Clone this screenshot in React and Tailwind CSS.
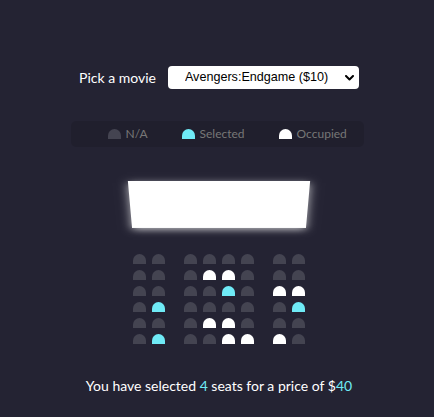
import React, { useState } from "react";

const N = 0;
const S = 1;
const O = 2;

const rows = [
  [N, N, N, N, N, N, N, N],
  [N, N, N, O, O, N, N, N],
  [N, N, N, N, S, N, O, O],
  [N, S, N, N, N, N, N, S],
  [N, N, N, O, O, N, N, N],
  [N, S, N, N, O, O, O, N],
];

const seatColor = {
  [N]: "bg-[#444451]",
  [S]: "bg-[#6feaf6]",
  [O]: "bg-white",
};

const Seat = ({ state, className = "" }) => (
  <div
    className={`w-[13px] h-[10px] rounded-t-[7px] ${seatColor[state]} ${className}`}
  />
);

const App = () => {
  const [movie, setMovie] = useState("10");
  const count = 4;
  const price = count * Number(movie);

  return (
    <div
      className="min-h-[417px] w-full bg-[#242333] text-white flex flex-col items-center pl-1 pt-[66px]"
      style={{ fontFamily: "Lato, 'Open Sans', sans-serif" }}
    >
      <div className="flex items-center">
        <label className="text-[14px] mr-[12px]">Pick a movie</label>
        <div className="relative">
          <select
            value={movie}
            onChange={(e) => setMovie(e.target.value)}
            className="appearance-none bg-white text-black rounded-[4px] w-[191px] h-[23px] pl-[17px] pr-6 text-[12.6px] outline-none block"
            style={{ fontFamily: "'Liberation Sans', Arial, sans-serif" }}
          >
            <option value="10">Avengers:Endgame ($10)</option>
            <option value="12">Joker ($12)</option>
            <option value="8">Toy Story 4 ($8)</option>
            <option value="9">The Lion King ($9)</option>
          </select>
          <svg
            className="absolute right-[5px] top-[9px] pointer-events-none"
            width="9"
            height="6"
            viewBox="0 0 9 6"
          >
            <path
              d="M1 1 L4.5 4.5 L8 1"
              fill="none"
              stroke="#000"
              strokeWidth="2"
              strokeLinecap="round"
              strokeLinejoin="round"
            />
          </svg>
        </div>
      </div>

      <ul className="mt-[32px] -ml-1 w-[293px] h-[26px] rounded-[5px] bg-black/10 flex items-center pl-[37px] pr-[18px] gap-[34px] text-[#777] text-[12px]">
        <li className="flex items-center gap-[5px]">
          <Seat state={N} />
          <span>N/A</span>
        </li>
        <li className="flex items-center gap-[5px]">
          <Seat state={S} />
          <span>Selected</span>
        </li>
        <li className="flex items-center gap-[5px]">
          <Seat state={O} />
          <span>Occupied</span>
        </li>
      </ul>

      <div className="mt-[25px] [perspective:1000px] flex justify-center">
        <div className="w-[178px] h-[66px] bg-white [transform:rotateX(-45deg)] shadow-[0_3px_10px_rgba(255,255,255,0.7)]" />
      </div>

      <div className="mt-[13px] flex flex-col">
        {rows.map((row, r) => (
          <div key={r} className="flex">
            {row.map((s, c) => (
              <Seat
                key={c}
                state={s}
                className={`m-[3px] ${c === 1 ? "mr-[16px]" : ""} ${
                  c === 6 ? "ml-[16px]" : ""
                }`}
              />
            ))}
          </div>
        ))}
      </div>

      <p className="mt-[28px] text-[14px]">
        You have selected <span className="text-[#6feaf6]">{count}</span> seats
        for a price of $<span className="text-[#6feaf6]">{price}</span>
      </p>
    </div>
  );
};

export default App;
